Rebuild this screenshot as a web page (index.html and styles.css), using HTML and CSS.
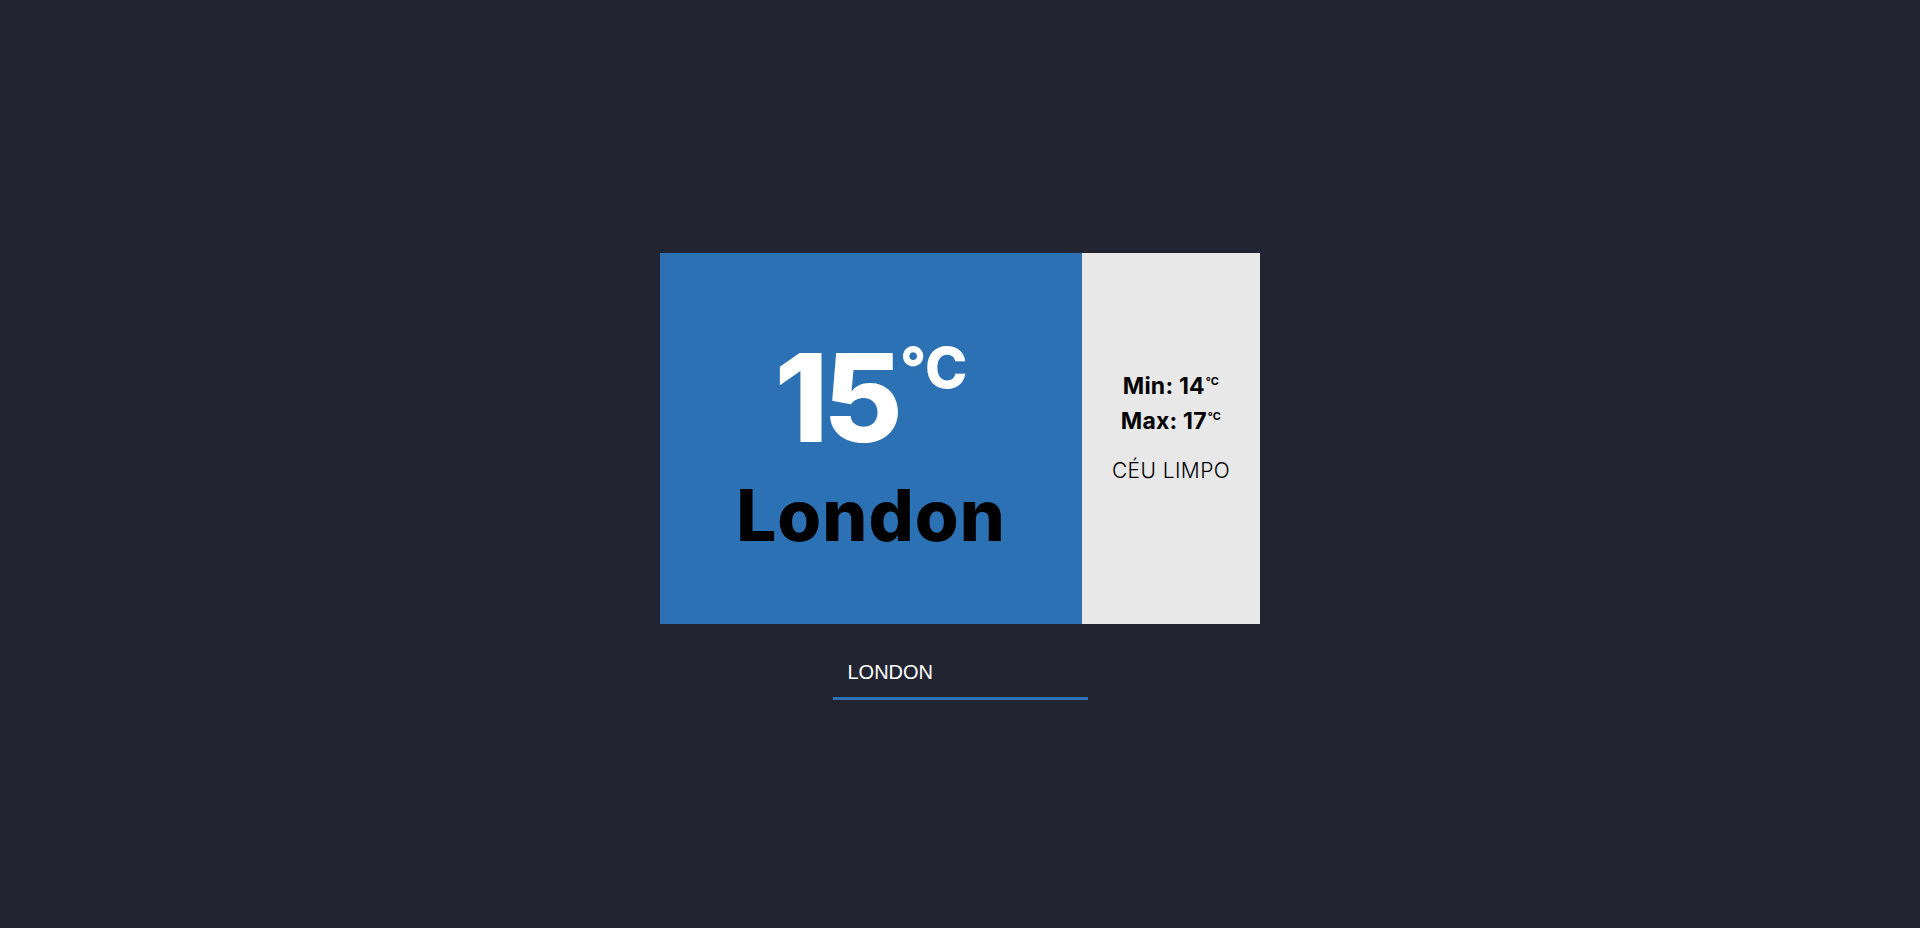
FILE: index.html
```html
<!DOCTYPE html>
<html lang="pt">
<head>
<meta charset="utf-8">
<title>Clima</title>
<link rel="stylesheet" href="styles.css">
</head>
<body>
<div class="app">
  <div class="card">
    <div class="main">
      <div class="temp">15<span class="unit">°C</span></div>
      <div class="city">London</div>
    </div>
    <div class="side">
      <div class="minmax">Min: 14<span class="u">°C</span></div>
      <div class="minmax">Max: 17<span class="u">°C</span></div>
      <div class="desc">CÉU LIMPO</div>
    </div>
  </div>
  <input class="search" type="text" value="LONDON">
</div>
</body>
</html>
```
FILE: styles.css
```css
* { box-sizing: border-box; }
html, body { margin: 0; padding: 0; }
body {
  background: #222431;
  font-family: Inter, "Noto Sans", sans-serif;
}
.app {
  height: 100vh;
  display: flex;
  flex-direction: column;
  align-items: center;
  justify-content: center;
  padding-top: 24px;
}
.card {
  width: 600px;
  height: 371px;
  display: flex;
}
.main {
  width: 422px;
  background: #2c71b4;
  display: flex;
  flex-direction: column;
  align-items: center;
  justify-content: center;
  padding-top: 6px;
}
.temp {
  color: #fff;
  font-weight: 800;
  font-size: 122px;
  line-height: 1;
  letter-spacing: -5px;
  display: flex;
  align-items: flex-start;
  margin-top: 6px;
}
.unit {
  font-size: 57px;
  line-height: 1;
  margin-top: 2px;
  margin-left: 2px;
  letter-spacing: 0;
}
.city {
  color: #000;
  font-weight: 800;
  font-size: 71px;
  line-height: 1;
  margin-top: 21px;
  letter-spacing: 1px;
}
.side {
  flex: 1;
  background: #e8e8e8;
  display: flex;
  flex-direction: column;
  align-items: center;
  justify-content: center;
  padding-bottom: 24px;
}
.minmax {
  color: #000;
  font-weight: 700;
  font-size: 23px;
  line-height: 35px;
  letter-spacing: 0.2px;
}
.u {
  font-size: 11px;
  line-height: 0;
  position: relative;
  top: -9px;
  margin-left: 1px;
}
.desc {
  color: #000;
  font-weight: 300;
  font-size: 21px;
  letter-spacing: 0.4px;
  margin-top: 19px;
}
.search {
  margin-top: 28px;
  width: 255px;
  height: 48px;
  background: transparent;
  border: none;
  border-bottom: 3px solid #2c71b4;
  color: #fff;
  font-family: "Liberation Sans", Arial, sans-serif;
  font-size: 20px;
  padding: 0 15px 4px;
  outline: none;
}
```
